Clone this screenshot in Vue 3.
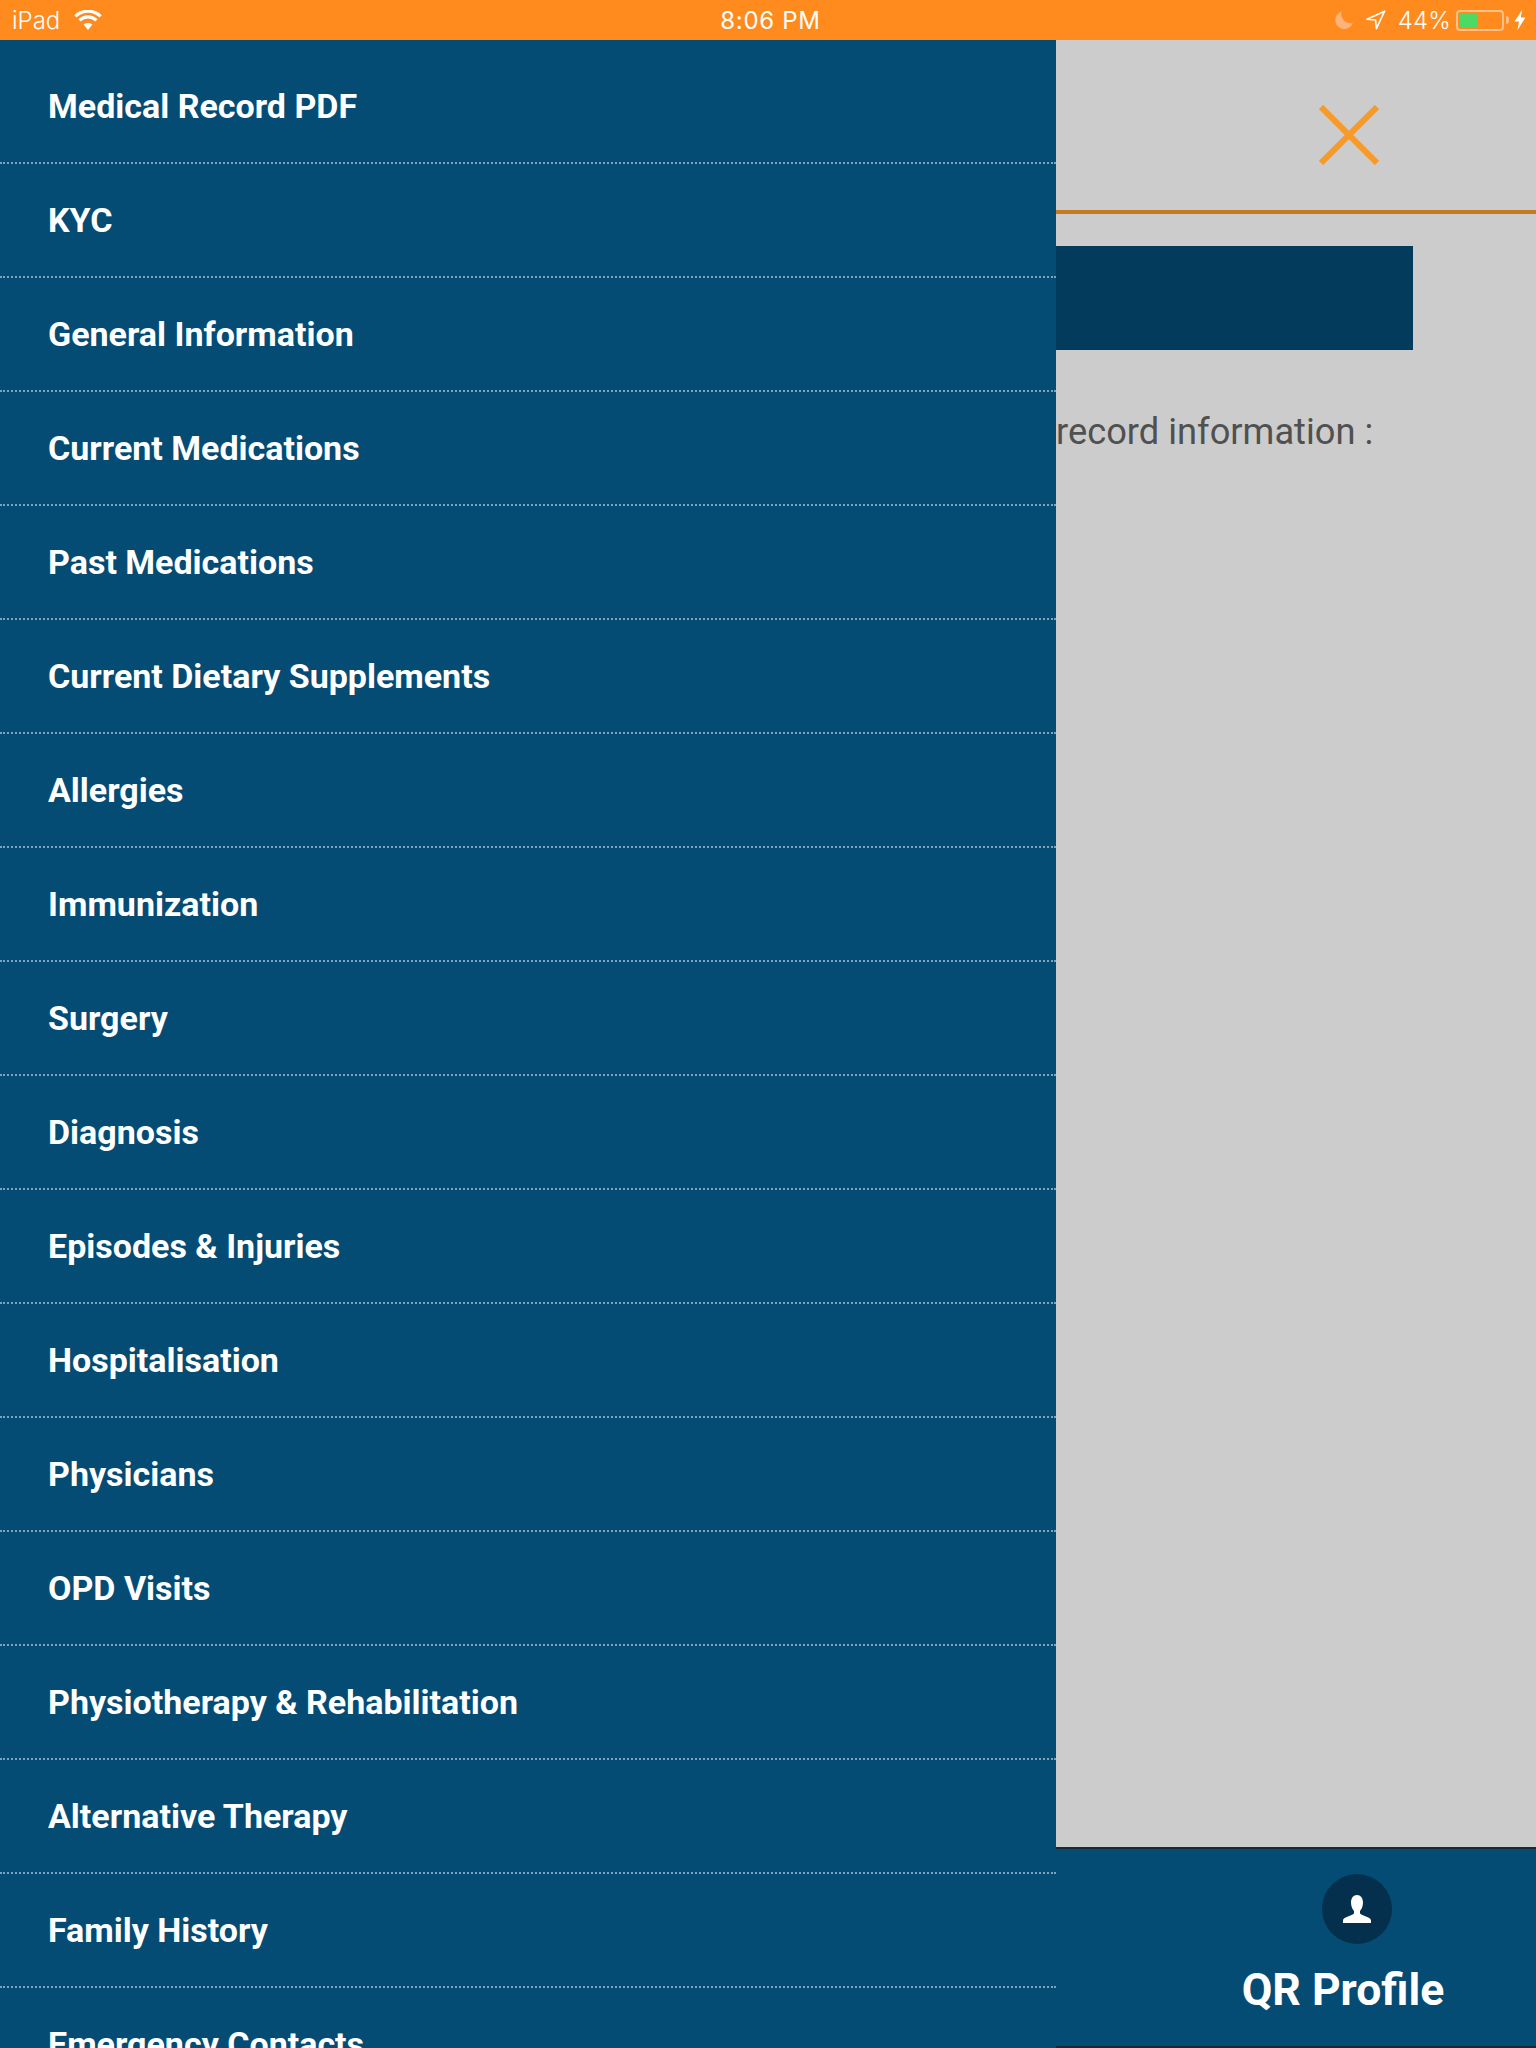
<script setup>
const items = [
  'Medical Record PDF', 'KYC', 'General Information', 'Current Medications', 'Past Medications',
  'Current Dietary Supplements', 'Allergies', 'Immunization', 'Surgery', 'Diagnosis',
  'Episodes & Injuries', 'Hospitalisation', 'Physicians', 'OPD Visits',
  'Physiotherapy & Rehabilitation', 'Alternative Therapy', 'Family History', 'Emergency Contacts'
]
</script>

<template>
  <div class="screen">
    <header class="status">
      <div class="status-left">
        <span class="carrier">iPad</span>
        <svg class="wifi" viewBox="0 0 28 20" width="28" height="20">
          <path d="M14 20 L9.6 14.6 A7 7 0 0 1 18.4 14.6 Z" fill="#fff" />
          <path d="M5.6 10.4 A12 12 0 0 1 22.4 10.4" fill="none" stroke="#fff" stroke-width="3.2" />
          <path d="M1.4 6.4 A18 18 0 0 1 26.6 6.4" fill="none" stroke="#fff" stroke-width="3.2" />
        </svg>
      </div>
      <span class="time">8:06 PM</span>
      <div class="status-right">
        <svg class="moon" viewBox="0 0 18 18" width="18" height="18">
          <path d="M6.5 0.5 A9 9 0 1 0 17.8 12 A9.5 9.5 0 0 1 6.5 0.5 Z" fill="#ffb27a" />
        </svg>
        <svg class="arrow" viewBox="0 0 20 20" width="20" height="20">
          <path d="M1 9.2 L18.6 1.2 L10.4 18.6 L9.6 10 Z" fill="none" stroke="#fff" stroke-width="1.6" stroke-linejoin="round" />
        </svg>
        <span class="pct">44%</span>
        <div class="battery"><div class="charge"></div></div>
        <div class="nub"></div>
        <svg class="bolt" viewBox="0 0 12 20" width="12" height="20">
          <path d="M8 0 L0.5 11.5 H5 L3.5 20 L11.5 7.5 H6.8 Z" fill="#fff" />
        </svg>
      </div>
    </header>

    <div class="body">
      <nav class="drawer">
        <div v-for="item in items" :key="item" class="row">{{ item }}</div>
      </nav>

      <main class="main">
        <div class="top">
          <svg class="close" viewBox="0 0 60 60" width="60" height="60">
            <path d="M2 2 L58 58 M58 2 L2 58" stroke="#f79a2a" stroke-width="6" fill="none" />
          </svg>
        </div>
        <div class="banner"></div>
        <p class="info">record information :</p>
        <footer class="foot">
          <div class="avatar">
            <svg viewBox="0 0 28 28" width="28" height="28">
              <path d="M14 0 C10.4 0 8 3 8 7.5 C8 11.5 9.6 14.5 11 16 V18.5 C8 21 0 22 0 25.5 V28 H28 V25.5 C28 22 20 21 17 18.5 V16 C18.4 14.5 20 11.5 20 7.5 C20 3 17.6 0 14 0 Z" fill="#fff" />
            </svg>
          </div>
          <div class="qr">QR Profile</div>
        </footer>
      </main>
    </div>
  </div>
</template>

<style>
html, body { margin: 0; padding: 0; }
</style>

<style scoped>
.screen {
  width: 1536px;
  height: 2048px;
  overflow: hidden;
  display: flex;
  flex-direction: column;
  background: #cccccc;
  font-family: Roboto, "Liberation Sans", sans-serif;
}
.status {
  height: 40px;
  flex: none;
  background: #ff8a1e;
  display: grid;
  grid-template-columns: 1fr auto 1fr;
  align-items: center;
  color: #fff;
  font-family: Inter, "Liberation Sans", sans-serif;
  font-size: 24px;
  font-weight: 300;
  padding: 0 10px 0 12px;
}
.status-left { display: flex; align-items: center; gap: 14px; }
.status-right { display: flex; align-items: center; justify-content: flex-end; }
.time { font-weight: 400; letter-spacing: 0.7px; margin-left: 3px; }
.moon { margin-right: 13px; }
.arrow { margin-right: 12px; }
.pct { margin-right: 5px; letter-spacing: 0.2px; }
.battery {
  width: 48px;
  height: 21px;
  box-sizing: border-box;
  border: 2px solid #ffc08a;
  border-radius: 4px;
  padding: 2px;
}
.charge { width: 18px; height: 100%; background: #4cd964; }
.nub {
  width: 3px;
  height: 8px;
  margin-left: 2px;
  margin-right: 5px;
  background: #ffc08a;
  border-radius: 0 3px 3px 0;
}
.body { flex: 1; min-height: 0; display: flex; }
.drawer {
  width: 1056px;
  flex: none;
  background: #054c75;
  padding-top: 10px;
  box-sizing: border-box;
  overflow: hidden;
}
.row {
  height: 114px;
  box-sizing: border-box;
  border-bottom: 2px dotted #7fa3bb;
  display: flex;
  align-items: center;
  padding-left: 48px;
  color: #fff;
  font-size: 34px;
  font-weight: 700;
}
.main { flex: 1; min-width: 0; display: flex; flex-direction: column; overflow: hidden; }
.top {
  height: 174px;
  box-sizing: border-box;
  flex: none;
  border-bottom: 4px solid #c47a22;
  display: flex;
  justify-content: flex-end;
  padding: 65px 157px 0 0;
}
.banner { height: 104px; margin: 32px 123px 0 0; background: #033b5c; flex: none; }
.info {
  margin: 60px 0 0 0;
  font-size: 36.25px;
  line-height: 44px;
  color: #505050;
  white-space: nowrap;
}
.foot {
  margin-top: auto;
  height: 201px;
  box-sizing: border-box;
  background: #054c75;
  border-top: 2px solid #16293a;
  border-bottom: 2px solid #16293a;
  padding: 25px 0 0 94px;
  display: flex;
  flex-direction: column;
  align-items: center;
}
.avatar {
  width: 70px;
  height: 70px;
  margin-left: 28px;
  border-radius: 50%;
  background: #04304d;
  display: flex;
  align-items: center;
  justify-content: center;
}
.qr { margin-top: 20px; color: #fff; font-size: 44.5px; line-height: 52px; font-weight: 700; white-space: nowrap; }
</style>
